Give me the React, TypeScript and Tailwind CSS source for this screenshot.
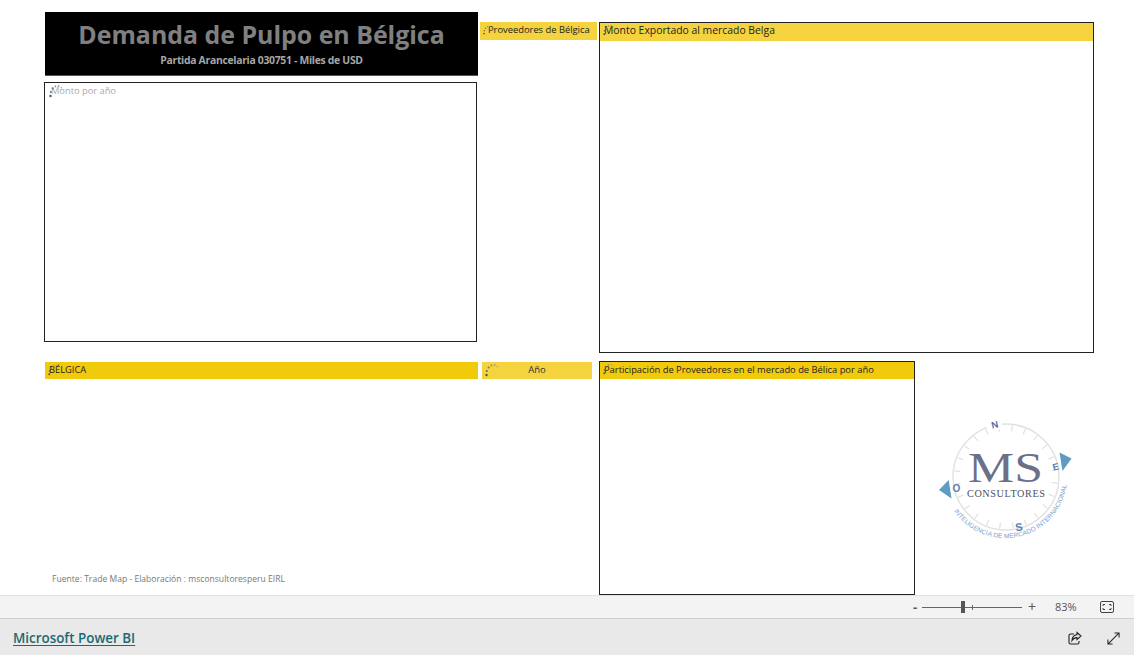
import React from 'react'

const font = "font-['Open_Sans',sans-serif]"

function Spinner({ className }: { className: string }) {
  return (
    <svg viewBox="0 0 14 14" className={`absolute ${className}`}>
      <circle cx="1.5" cy="12" r="1.2" fill="#555" />
      <circle cx="1.8" cy="8" r="1" fill="#666" />
      <circle cx="3.6" cy="4.6" r="1" fill="#777" />
      <circle cx="6.4" cy="2.4" r="0.9" fill="#888" />
      <circle cx="9.6" cy="2" r="0.9" fill="#999" />
      <circle cx="12.4" cy="3.6" r="0.8" fill="#aaa" />
    </svg>
  )
}

function Header({
  title,
  color,
  className
}: {
  title: string
  color: string
  className: string
}) {
  return (
    <div className={`relative text-[#222] ${color} ${className}`}>
      {title}
    </div>
  )
}

function Logo() {
  const ticks = Array.from({ length: 24 }, (_, i) => (i * 360) / 24)
  return (
    <svg viewBox="935 415 137 130" className="w-[137px] h-[130px]">
      <defs>
        <path id="logo-arc" d="M952 511 A62 62 0 0 0 1065 482" />
      </defs>
      <circle cx="1004" cy="477" r="53" fill="none" stroke="#e2e2e2" strokeWidth="1.5" />
      {ticks.map((a) => (
        <line
          key={a}
          x1="1004"
          y1="431"
          x2="1004"
          y2="425"
          stroke="#dcdcdc"
          strokeWidth="1"
          transform={`rotate(${a + 7} 1004 477)`}
        />
      ))}
      <rect x="985" y="419" width="15" height="10" fill="#fff" />
      <text x="992.5" y="428" textAnchor="middle" fontSize="9.5" fontWeight="700" fill="#5a6fa8" fontFamily="Liberation Sans, sans-serif" transform="rotate(-14 992.5 424)">N</text>
      <text x="1053.5" y="470" textAnchor="middle" fontSize="9.5" fontWeight="700" fill="#5a7fb0" fontFamily="Liberation Sans, sans-serif" transform="rotate(-14 1054 466)">E</text>
      <text x="1017" y="531" textAnchor="middle" fontSize="11" fontWeight="700" fill="#5a7fb0" fontFamily="Liberation Sans, sans-serif" transform="rotate(-10 1017 527)">S</text>
      <text x="954.5" y="492" textAnchor="middle" fontSize="10" fontWeight="700" fill="#5a7fb0" fontFamily="Liberation Sans, sans-serif">O</text>
      <polygon points="1057.5,452.5 1069.5,458.5 1060.5,471" fill="#5f9cc4" />
      <polygon points="946.7,480 937,490 949.5,498.5" fill="#5f9cc4" />
      <text x="966" y="481.5" fontSize="42" fill="#6b7088" fontFamily="Liberation Serif, serif" textLength="75" lengthAdjust="spacingAndGlyphs">MS</text>
      <text x="965" y="496.5" fontSize="10.2" fill="#4b4f5e" fontFamily="Liberation Serif, serif" textLength="78" lengthAdjust="spacing">CONSULTORES</text>
      <text fontSize="6.5" fill="#7b9ccb" fontFamily="Liberation Sans, sans-serif" letterSpacing="0.1">
        <textPath href="#logo-arc">INTELIGENCIA DE MERCADO INTERNACIONAL</textPath>
      </text>
    </svg>
  )
}

export default function App() {
  return (
    <div className={`${font} w-[1134px] h-[655px] flex flex-col bg-white overflow-hidden`}>
      <div className="h-[361px] flex pl-[44px]">
        <div className="w-[434px] shrink-0 pt-3">
          <div className="ml-px h-[64px] bg-black flex flex-col items-center pt-[3px] border-b border-[#555]">
            <div className="text-[24.9px] leading-[38px] font-bold text-[#808080]">
              Demanda de Pulpo en Bélgica
            </div>
            <div className="text-[10.4px] leading-[14px] font-bold tracking-[-0.3px] text-[#a6a6a6]">
              Partida Arancelaria 030751 - Miles de USD
            </div>
          </div>
          <div className="relative mt-[6px] w-[433px] h-[260px] border border-[#222] pl-[6px] text-[9.3px] leading-[16px] text-[#a8a8a8]">
            Monto por año
            <Spinner className="left-[4px] top-[1px] w-[14px] h-[14px]" />
          </div>
        </div>
        <div className="w-[117px] shrink-0 ml-[2px] mt-[22px]">
          <Header
            title="Proveedores de Bélgica"
            color="bg-[#f5d33f]"
            className="h-[18px] pl-[8px] text-[9.35px] leading-[16px]"
          />
          <Spinner className="left-[483px] top-[25px] w-[10px] h-[10px]" />
        </div>
        <div className="relative w-[495px] h-[331px] shrink-0 ml-[2px] mt-[22px] border border-[#222]">
          <Header
            title="Monto Exportado al mercado Belga"
            color="bg-[#f5d33f]"
            className="h-[18px] pl-[4px] text-[10.4px] leading-[15px]"
          />
          <Spinner className="left-[3px] top-px w-[12px] h-[12px]" />
        </div>
      </div>
      <div className="h-[234px] flex pl-[45px]">
        <div className="relative w-[433px] shrink-0 pt-px">
          <Header title="BÉLGICA" color="bg-[#f2ca0c]" className="h-[17px] pl-[4px] text-[9.3px] leading-[16px]" />
          <Spinner className="left-[3px] top-[3px] w-[12px] h-[12px]" />
          <div className="absolute left-[7px] top-[212px] text-[8.5px] tracking-[0.04px] leading-[12px] text-[#777]">
            Fuente: Trade Map - Elaboración : msconsultoresperu EIRL
          </div>
        </div>
        <div className="relative w-[110px] shrink-0 ml-[4px] pt-px">
          <div className="h-[17px] bg-[#f5d33f] text-center text-[9.5px] leading-[16px] text-[#333]">
            Año
          </div>
          <Spinner className="left-[3px] top-[2px] w-[14px] h-[14px]" />
        </div>
        <div className="relative w-[316px] h-[234px] shrink-0 ml-[7px] border border-[#222]">
          <Header
            title="Participación de Proveedores en el mercado de Bélica por año"
            color="bg-[#f2ca0c]"
            className="h-[17px] pl-[4px] text-[9.35px] leading-[16px]"
          />
          <Spinner className="left-[3px] top-px w-[12px] h-[12px]" />
        </div>
        <div className="ml-[22px] mt-[54px]">
          <Logo />
        </div>
      </div>
      <div className="h-[24px] shrink-0 flex items-center bg-[#f3f3f3] border-t border-t-[#e2e2e2] border-b border-b-[#cfcfcf] text-[#555]">
        <span className="ml-[913px] w-[9px] text-[13px] font-bold leading-none">-</span>
        <div className="relative w-[100px] h-px bg-[#666]">
          <div className="absolute left-[39px] -top-[6px] w-[4px] h-[12px] bg-[#555]" />
          <div className="absolute left-[50px] -top-[2px] w-px h-[5px] bg-[#666]" />
        </div>
        <span className="ml-[6px] w-[9px] text-[14px] leading-none">+</span>
        <span className="ml-[18px] w-[24px] text-[11px]">83%</span>
        <svg viewBox="0 0 14 12" className="ml-[21px] w-[14px] h-[12px]" fill="none" stroke="#444" strokeWidth="1">
          <rect x="0.5" y="0.5" width="13" height="11" rx="1.5" />
          <path d="M3 5V3.5h2M9 3.5h2V5M11 7v1.5H9M5 8.5H3V7" />
        </svg>
      </div>
      <div className="flex-1 flex items-center bg-[#e9e9e9] pl-[13px] pt-[2px]">
        <a className="text-[13.4px] font-semibold text-[#1c6a70] underline underline-offset-2">Microsoft Power BI</a>
        <svg viewBox="0 0 14 14" className="ml-auto w-[14px] h-[14px]" fill="none" stroke="#222" strokeWidth="1.1">
          <path d="M6 3H2.5A1.5 1.5 0 0 0 1 4.5v7A1.5 1.5 0 0 0 2.5 13h7a1.5 1.5 0 0 0 1.5-1.5V10" />
          <path d="M9 1.5 13 5 9 8.5V6.6C6.8 6.6 5.2 7.6 4 9.4 4.2 6.6 6 4 9 3.6Z" />
        </svg>
        <svg viewBox="0 0 14 14" className="ml-[25px] mr-[14px] w-[13px] h-[13px]" fill="none" stroke="#222" strokeWidth="1.1">
          <path d="M1 13 13 1M8 1h5v5M1 8v5h5" />
        </svg>
      </div>
    </div>
  )
}
